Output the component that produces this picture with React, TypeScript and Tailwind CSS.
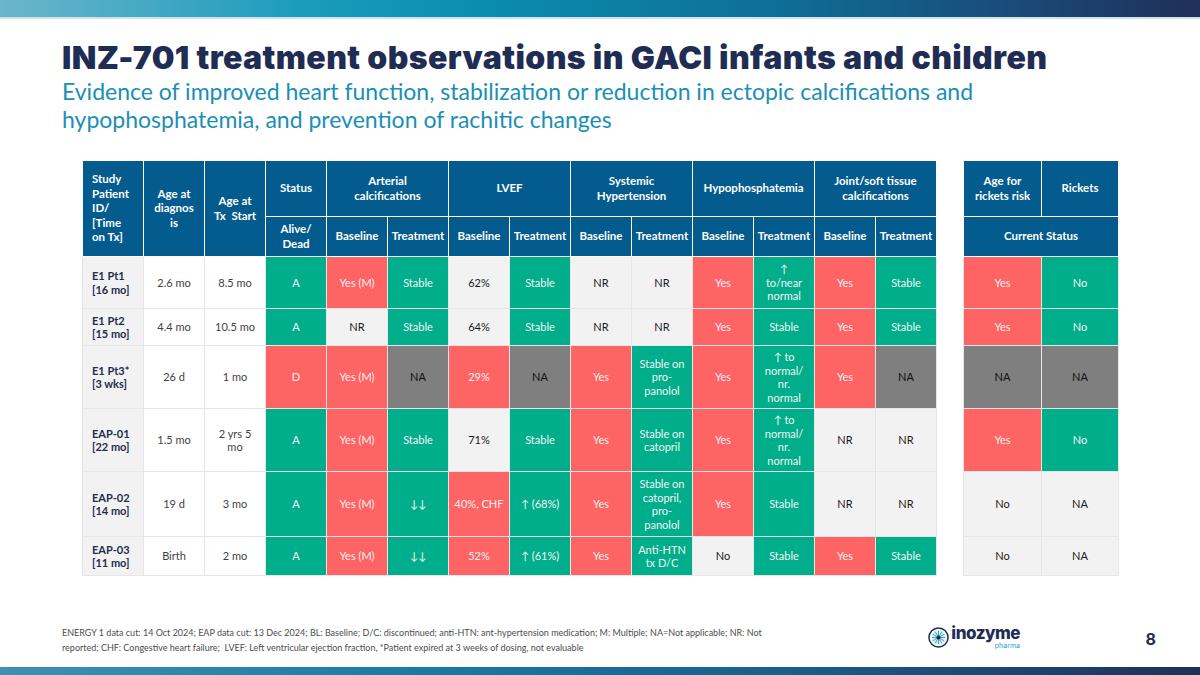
import React from "react"

type Tone = "g" | "r" | "n" | "l" | "w"

type Row = {
  id: string[]
  h: string
  cells: [Tone, string][]
  tail: [Tone, string][]
}

const tone: Record<Tone, string> = {
  g: "bg-[#00ae8b] text-[#f4f4f4]",
  r: "bg-[#ff6464] text-[#f8f0f0]",
  n: "bg-[#7f7f7f] text-[#111111]",
  l: "bg-[#f2f2f2] text-[#1a1a1a]",
  w: "bg-white text-[#3f3f3f]",
}

const rows: Row[] = [
  {
    id: ["E1 Pt1", "[16 mo]"],
    h: "h-[52px]",
    cells: [
      ["w", "2.6 mo"], ["w", "8.5 mo"], ["g", "A"], ["r", "Yes (M)"], ["g", "Stable"], ["l", "62%"],
      ["g", "Stable"], ["l", "NR"], ["l", "NR"], ["r", "Yes"], ["g", "↑\nto/near\nnormal"], ["r", "Yes"], ["g", "Stable"],
    ],
    tail: [["r", "Yes"], ["g", "No"]],
  },
  {
    id: ["E1 Pt2", "[15 mo]"],
    h: "h-[37px]",
    cells: [
      ["w", "4.4 mo"], ["w", "10.5 mo"], ["g", "A"], ["l", "NR"], ["g", "Stable"], ["l", "64%"],
      ["g", "Stable"], ["l", "NR"], ["l", "NR"], ["r", "Yes"], ["g", "Stable"], ["r", "Yes"], ["g", "Stable"],
    ],
    tail: [["r", "Yes"], ["g", "No"]],
  },
  {
    id: ["E1 Pt3*", "[3 wks]"],
    h: "h-[63px]",
    cells: [
      ["w", "26 d"], ["w", "1 mo"], ["r", "D"], ["r", "Yes (M)"], ["n", "NA"], ["r", "29%"],
      ["n", "NA"], ["r", "Yes"], ["g", "Stable on\npro-\npanolol"], ["r", "Yes"], ["g", "↑ to\nnormal/\nnr.\nnormal"], ["r", "Yes"], ["n", "NA"],
    ],
    tail: [["n", "NA"], ["n", "NA"]],
  },
  {
    id: ["EAP-01", "[22 mo]"],
    h: "h-[63px]",
    cells: [
      ["w", "1.5 mo"], ["w", "2 yrs 5\nmo"], ["g", "A"], ["r", "Yes (M)"], ["g", "Stable"], ["l", "71%"],
      ["g", "Stable"], ["r", "Yes"], ["g", "Stable on\ncatopril"], ["r", "Yes"], ["g", "↑ to\nnormal/\nnr.\nnormal"], ["l", "NR"], ["l", "NR"],
    ],
    tail: [["r", "Yes"], ["g", "No"]],
  },
  {
    id: ["EAP-02", "[14 mo]"],
    h: "h-[65px]",
    cells: [
      ["w", "19 d"], ["w", "3 mo"], ["g", "A"], ["r", "Yes (M)"], ["g", "↓↓"], ["r", "40%, CHF"],
      ["g", "↑ (68%)"], ["r", "Yes"], ["g", "Stable on\ncatopril,\npro-\npanolol"], ["r", "Yes"], ["g", "Stable"], ["l", "NR"], ["l", "NR"],
    ],
    tail: [["l", "No"], ["l", "NA"]],
  },
  {
    id: ["EAP-03", "[11 mo]"],
    h: "h-[39px]",
    cells: [
      ["w", "Birth"], ["w", "2 mo"], ["g", "A"], ["r", "Yes (M)"], ["g", "↓↓"], ["r", "52%"],
      ["g", "↑ (61%)"], ["r", "Yes"], ["g", "Anti-HTN\ntx D/C"], ["l", "No"], ["g", "Stable"], ["r", "Yes"], ["g", "Stable"],
    ],
    tail: [["l", "No"], ["l", "NA"]],
  },
]

const lines = (s: string) =>
  s.split("\n").map((t, i) => (
    <React.Fragment key={i}>
      {i > 0 && <br />}
      {t}
    </React.Fragment>
  ))

const th = "bg-[#035b8e] text-white font-bold border border-white text-center align-middle px-0.5"
const td = "border border-[#e6e6e6] text-center align-middle px-0.5"

function Logo() {
  return (
    <div className="flex items-center gap-[2px]">
      <svg width="21" height="21" viewBox="0 0 22 22">
        <circle cx="11" cy="11" r="10" fill="none" stroke="#1f2d55" strokeWidth="1.6" />
        <circle cx="11" cy="11" r="7.6" fill="#dff1f6" />
        {Array.from({ length: 12 }).map((_, i) => {
          const a = (i * Math.PI) / 6
          return (
            <line
              key={i}
              x1={11 + Math.cos(a) * 2.5}
              y1={11 + Math.sin(a) * 2.5}
              x2={11 + Math.cos(a) * 7}
              y2={11 + Math.sin(a) * 7}
              stroke="#2ba3c4"
              strokeWidth="1"
            />
          )
        })}
        <circle cx="11" cy="11" r="2.3" fill="#1f2d55" />
      </svg>
      <div className="flex flex-col items-end">
        <span className="font-['Inter',sans-serif] font-extrabold text-[17px] text-[#1f2d55] tracking-[-0.5px] leading-[17px]">
          inozyme
        </span>
        <span className="font-['Inter',sans-serif] text-[7px] text-[#2ba3c4] leading-[8px]">pharma</span>
      </div>
    </div>
  )
}

export default function App() {
  return (
    <div className="w-[1200px] h-[675px] bg-white relative overflow-hidden flex flex-col font-['Lato',sans-serif]">
      <div className="h-[17px] bg-[linear-gradient(90deg,#6cb5cb_0%,#1b9cbd_25%,#0a8db0_40%,#0e6e97_65%,#1a4a78_85%,#1f2f58_100%)]" />
      <div className="h-[2px] bg-[#cfe3ea]" />

      <div className="pl-[62px] pt-[21px]">
        <h1 className="font-['Inter',sans-serif] font-black text-[32px] leading-[36px] text-[#1f2d55] tracking-[0.4px] whitespace-nowrap">
          INZ-701 treatment observations in GACI infants and children
        </h1>
        <p className="mt-[1px] text-[23px] leading-[28px] text-[#1a8fb6] w-[1000px]">
          Evidence of improved heart function, stabilization or reduction in ectopic calcifications and
          <br />
          hypophosphatemia, and prevention of rachitic changes
        </p>
      </div>

      <div className="pl-[82px] pt-[27px]">
        <table className="border-collapse table-fixed text-[11px] leading-[13.5px]">
          <colgroup>
            {Array.from({ length: 14 }).map((_, i) => (
              <col key={i} className="w-[61px]" />
            ))}
            <col className="w-[27px]" />
            <col className="w-[78px]" />
            <col className="w-[77px]" />
          </colgroup>
          <thead className="text-[11.5px] leading-[14.5px]">
            <tr className="h-[56px]">
              <th rowSpan={2} className={`${th} !text-left pl-[9px]`}>
                Study
                <br />
                Patient
                <br />
                ID/
                <br />
                [Time
                <br />
                on Tx]
              </th>
              <th rowSpan={2} className={th}>
                Age at
                <br />
                diagnos
                <br />
                is
              </th>
              <th rowSpan={2} className={th}>
                Age at
                <br />
                Tx&nbsp; Start
              </th>
              <th className={th}>Status</th>
              <th colSpan={2} className={th}>
                Arterial
                <br />
                calcifications
              </th>
              <th colSpan={2} className={th}>LVEF</th>
              <th colSpan={2} className={th}>
                Systemic
                <br />
                Hypertension
              </th>
              <th colSpan={2} className={th}>Hypophosphatemia</th>
              <th colSpan={2} className={th}>
                Joint/soft tissue
                <br />
                calcifications
              </th>
              <th className="border-0 bg-white" />
              <th className={th}>
                Age for
                <br />
                rickets risk
              </th>
              <th className={th}>Rickets</th>
            </tr>
            <tr className="h-[40px]">
              <th className={th}>
                Alive/
                <br />
                Dead
              </th>
              {Array.from({ length: 5 }).map((_, i) => (
                <React.Fragment key={i}>
                  <th className={th}>Baseline</th>
                  <th className={th}>Treatment</th>
                </React.Fragment>
              ))}
              <th className="border-0 bg-white" />
              <th colSpan={2} className={th}>Current Status</th>
            </tr>
          </thead>
          <tbody>
            {rows.map((r, ri) => (
              <tr key={ri} className={r.h}>
                <td className={`${td} bg-[#f2f2f2] text-left pl-[9px] font-bold text-[#1f2d4f]`}>
                  {r.id[0]}
                  <br />
                  {r.id[1]}
                </td>
                {r.cells.map(([t, s], ci) => (
                  <td key={ci} className={`${td} ${tone[t]}`}>
                    {lines(s)}
                  </td>
                ))}
                <td className="border-0 bg-white" />
                {r.tail.map(([t, s], ci) => (
                  <td key={ci} className={`${td} ${tone[t]}`}>
                    {lines(s)}
                  </td>
                ))}
              </tr>
            ))}
          </tbody>
        </table>
      </div>

      <div className="flex-1" />

      <div className="flex items-start pl-[62px] pr-[44px] pb-[12px]">
        <p className="text-[9px] leading-[14.5px] text-[#4d4d4d] w-[760px]">
          ENERGY 1 data cut: 14 Oct 2024; EAP data cut: 13 Dec 2024; BL: Baseline; D/C: discontinued; anti-HTN:
          ant-hypertension medication; M: Multiple; NA=Not applicable; NR: Not
          <br />
          reported; CHF: Congestive heart failure;&nbsp; LVEF: Left ventricular ejection fraction, *Patient expired at 3
          weeks of dosing, not evaluable
        </p>
        <div className="flex-1" />
        <div className="mt-[-1px]">
          <Logo />
        </div>
        <div className="w-[136px] text-right font-['Inter',sans-serif] font-bold text-[16px] text-[#1f2d55] mt-[1px]">8</div>
      </div>

      <div className="h-[8px] bg-[linear-gradient(90deg,#3f90b3_0%,#1b7aa3_35%,#1a5f8c_65%,#1f2f58_100%)]" />
    </div>
  )
}
